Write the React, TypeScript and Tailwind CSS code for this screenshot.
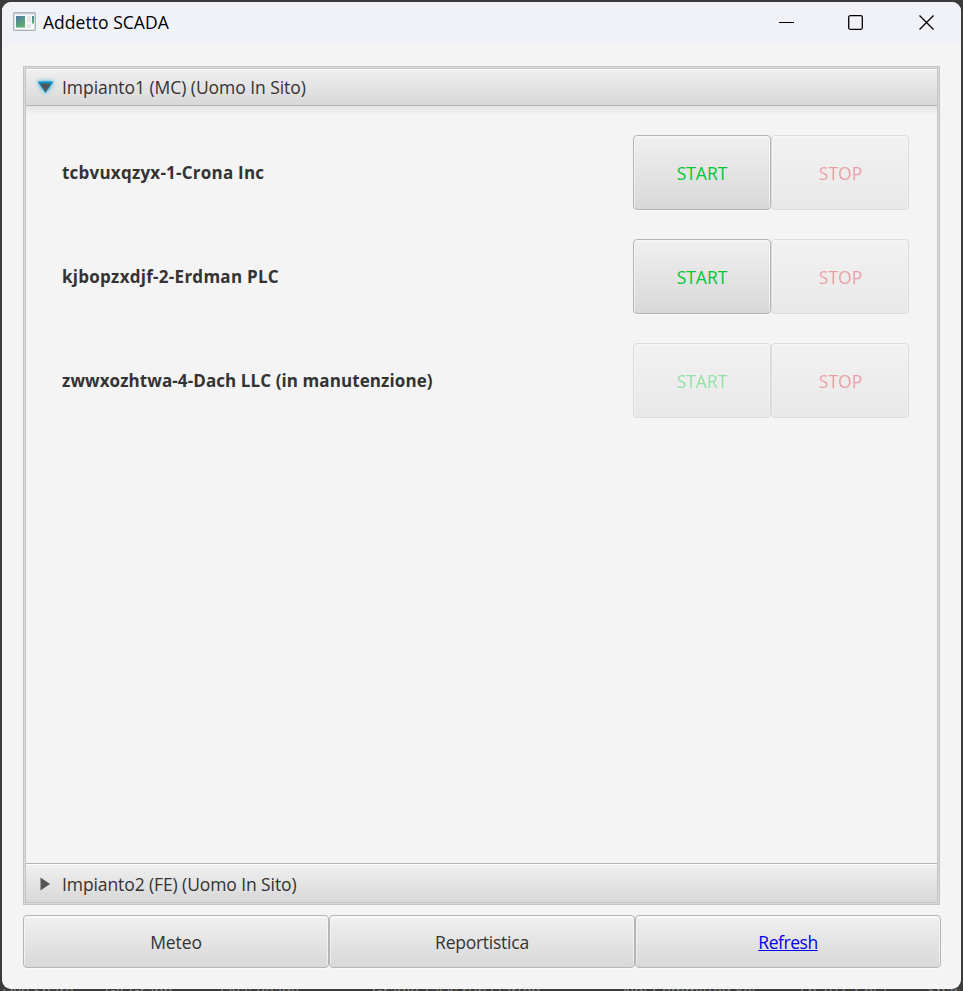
import React from "react";

const raised =
  "flex items-center justify-center rounded-[4px] border border-[#b5b5b5] bg-linear-to-b from-[#f0f0f0] to-[#d8d8d8] shadow-[inset_0_1px_0_1px_#fbfbfb99,0_1px_0_#fafafa]";

function PlantRow({ name, tracking, startOff }: { name: string; tracking: string; startOff?: boolean }) {
  return (
    <div className="flex h-[75px] items-center justify-between">
      <span className={`text-[17px] font-bold text-[#333] ${tracking}`}>{name}</span>
      <div className="flex h-full">
        <button className={`${raised} w-[138px] text-[#00c832] ${startOff ? "opacity-40" : ""}`}>START</button>
        <button className={`${raised} w-[138px] pl-px text-[#dc1e28] opacity-40`}>STOP</button>
      </div>
    </div>
  );
}

export default function App() {
  return (
    <div className="flex h-[991px] w-[963px] flex-col overflow-hidden bg-[#3b3b3b] px-[2px] pt-[2px] font-['Open_Sans',sans-serif] text-[17.5px] leading-6">
      <div className="flex h-[987px] shrink-0 flex-col overflow-hidden rounded-[9px] bg-[#f4f4f4]">
        <header className="flex h-[43px] shrink-0 items-start bg-[#f0f2f8] pl-[11px] pt-[8px]">
          <svg width="24" height="24" viewBox="0 0 24 24" className="mr-[6px]">
            <defs>
              <linearGradient id="pane" x1="0" y1="0" x2="0.6" y2="1">
                <stop offset="0" stopColor="#5278a8" />
                <stop offset="1" stopColor="#57b06c" />
              </linearGradient>
            </defs>
            <rect x="0.7" y="2.7" width="21.6" height="17.6" rx="1" fill="#f8f8f9" stroke="#a9adb5" strokeWidth="1.3" />
            <path d="M1 3.5H22" stroke="#c3c8d0" strokeWidth="1.4" />
            <rect x="3" y="6" width="9" height="11.5" fill="url(#pane)" />
            <rect x="14" y="6" width="4" height="6.5" fill="#e5e7e7" />
            <rect x="14" y="14" width="4" height="4" fill="#e5e7e7" />
            <rect x="19" y="6" width="2" height="7.5" fill="url(#pane)" />
          </svg>
          <h1 className="tracking-[0.04px] text-black">Addetto SCADA</h1>
          <svg className="ml-auto mr-[26px] mt-[4px]" width="156" height="16" viewBox="0 0 156 16" fill="none" stroke="#000" strokeWidth="1.3">
            <path d="M0 8.5H15" strokeWidth="1" />
            <rect x="69.7" y="1.7" width="13.6" height="13.6" rx="1.5" />
            <path d="M140.5 1.5l14 14M154.5 1.5l-14 14" />
          </svg>
        </header>
        <main className="flex flex-1 flex-col px-[21px] pt-[21px] text-[#333]">
          <section className="flex h-[839px] w-[917px] flex-col border border-[#c3c3c3] bg-[#dadada] p-px">
            <div className="flex flex-1 flex-col border border-[#c3c3c3] bg-[#f4f4f4]">
              <div className="flex h-[37px] items-center border-b border-b-[#b5b5b5] bg-linear-to-b from-[#f0f0f0] to-[#d8d8d8] pl-[10px] shadow-[inset_0_1px_0_#fff]">
                <svg width="20" height="20" viewBox="0 0 20 20" className="mr-[6px] overflow-visible drop-shadow-[0_0_2px_#0aa5dc]">
                  <path d="M1.5 4.5H17.5L9.5 16Z" fill="#0795c9" />
                  <path d="M4 6.5H15L9.5 15Z" fill="#555" />
                </svg>
                <span className="tracking-[-0.055px]">Impianto1 (MC) (Uomo In Sito)</span>
              </div>
              <div className="flex flex-1 flex-col gap-[29px] bg-[linear-gradient(#e4e4e4,#f4f4f4_9px)] pl-9 pr-[28px] pt-[29px]">
                <PlantRow name="tcbvuxqzyx-1-Crona Inc" tracking="tracking-[0.23px]" />
                <PlantRow name="kjbopzxdjf-2-Erdman PLC" tracking="tracking-[0.27px]" />
                <PlantRow name="zwwxozhtwa-4-Dach LLC (in manutenzione)" tracking="tracking-[0.09px]" startOff />
              </div>
              <div className="flex h-[39px] items-center border-t border-t-[#b5b5b5] bg-linear-to-b from-[#f0f0f0] to-[#d8d8d8] pl-[14px] pt-[2px] shadow-[inset_0_1px_0_#fff]">
                <svg width="10" height="14" viewBox="0 0 10 14" className="mr-3">
                  <path d="M0.5 0.5L10 7L0.5 13.5Z" fill="#555" />
                </svg>
                <span className="tracking-[-0.1px]">Impianto2 (FE) (Uomo In Sito)</span>
              </div>
            </div>
          </section>
          <nav className="mt-[10px] flex h-[53px] w-[918px]">
            <button className={`${raised} flex-1 tracking-[-0.1px]`}>Meteo</button>
            <button className={`${raised} flex-1 tracking-[-0.25px]`}>Reportistica</button>
            <button className={`${raised} flex-1 tracking-[-0.45px] text-[#0000ee] underline decoration-1`}>Refresh</button>
          </nav>
        </main>
      </div>
      <footer className="flex h-[2px] shrink-0 overflow-hidden whitespace-pre text-[15px] leading-[2px] text-[#8a8a8a]">
        <span className="w-[103px] shrink-0">Live Share</span>
        <span className="w-[115px] shrink-0">Git Graph</span>
        <span className="w-[152px] shrink-0">Java: Ready</span>
        <span className="w-[251px] shrink-0">Gradle Task: run started</span>
        <span className="w-[177px] shrink-0">Not Committed Yet</span>
        <span className="w-[128px] shrink-0">Ln 107, Col 1</span>
        <span className="shrink-0">Spaces</span>
      </footer>
    </div>
  );
}
